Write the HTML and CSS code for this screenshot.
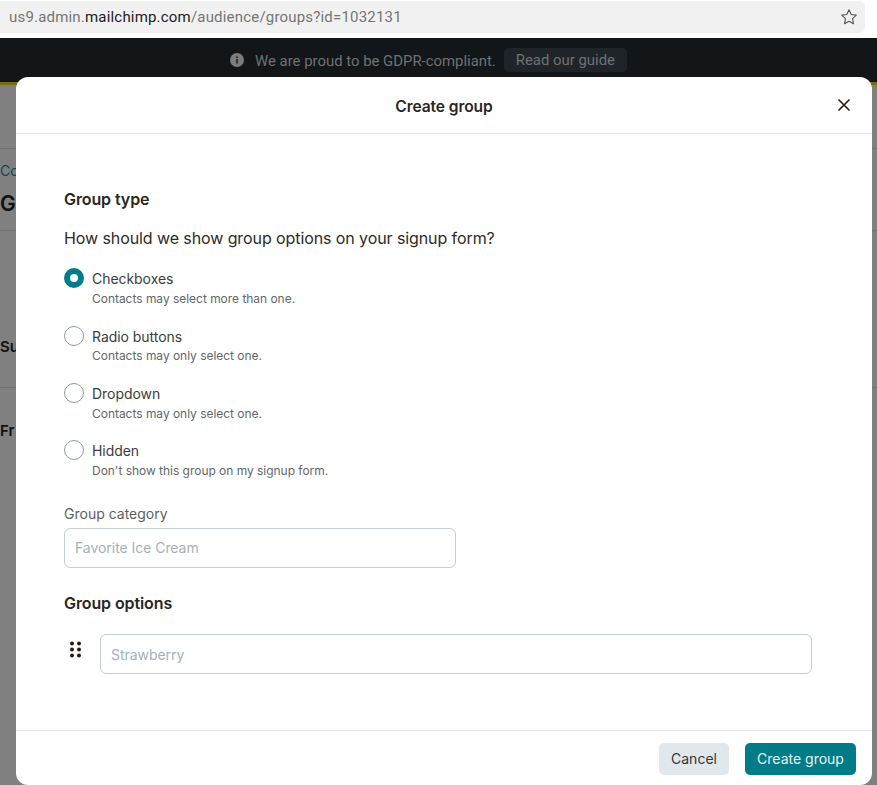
FILE: index.html
```html
<!DOCTYPE html>
<html lang="en">
<head>
<meta charset="utf-8">
<title>Create group</title>
<link rel="stylesheet" href="styles.css">
</head>
<body>
<div class="browser">
  <div class="url">
    <span class="url-text">us9.admin.<b>mailchimp.com</b>/audience/groups?id=1032131</span>
    <svg class="star" width="18" height="18" viewBox="0 0 18 18"><path d="M9 1.8l2.2 4.7 5.1.6-3.8 3.5 1 5.1L9 13.2l-4.5 2.5 1-5.1-3.8-3.5 5.1-.6z" fill="none" stroke="#555" stroke-width="1.1" stroke-linejoin="round"/></svg>
  </div>
</div>
<div class="banner">
  <svg class="info" width="14" height="14" viewBox="0 0 14 14"><circle cx="7" cy="7" r="7" fill="#7c7c7c"/><rect x="6.2" y="6" width="1.6" height="4.6" fill="#222"/><rect x="6.2" y="3.4" width="1.6" height="1.6" fill="#222"/></svg>
  <span class="banner-text">We are proud to be GDPR-compliant.</span>
  <span class="banner-btn">Read our guide</span>
</div>
<div class="page">
  <div class="rule r1"></div>
  <div class="crumb">Co</div>
  <div class="title">G</div>
  <div class="rule r2"></div>
  <div class="sub s1">Su</div>
  <div class="rule r3"></div>
  <div class="sub s2">Fr</div>
</div>
<div class="modal">
  <header class="m-head">
    <h1>Create group</h1>
    <svg class="close" width="14" height="14" viewBox="0 0 14 14"><path d="M1.5 1.5l11 11M12.5 1.5l-11 11" stroke="#241c15" stroke-width="1.6" fill="none"/></svg>
  </header>
  <div class="m-body">
    <h2>Group type</h2>
    <p class="question">How should we show group options on your signup form?</p>
    <div class="options">
      <div class="opt"><span class="radio on"></span><div><div class="o-label">Checkboxes</div><div class="o-desc">Contacts may select more than one.</div></div></div>
      <div class="opt"><span class="radio"></span><div><div class="o-label">Radio buttons</div><div class="o-desc">Contacts may only select one.</div></div></div>
      <div class="opt"><span class="radio"></span><div><div class="o-label">Dropdown</div><div class="o-desc">Contacts may only select one.</div></div></div>
      <div class="opt"><span class="radio"></span><div><div class="o-label">Hidden</div><div class="o-desc">Don't show this group on my signup form.</div></div></div>
    </div>
    <label class="f-label" for="cat">Group category</label>
    <input id="cat" class="field cat" placeholder="Favorite Ice Cream">
    <h2 class="h-opts">Group options</h2>
    <div class="opt-row">
      <svg class="drag" width="11" height="17" viewBox="0 0 11 17"><g fill="#241c15"><circle cx="2" cy="2.5" r="2"/><circle cx="9" cy="2.5" r="2"/><circle cx="2" cy="8.5" r="2"/><circle cx="9" cy="8.5" r="2"/><circle cx="2" cy="14.5" r="2"/><circle cx="9" cy="14.5" r="2"/></g></svg>
      <input class="field grow" placeholder="Strawberry">
    </div>
  </div>
  <footer class="m-foot">
    <button class="btn cancel">Cancel</button>
    <button class="btn primary">Create group</button>
  </footer>
</div>
</body>
</html>
```
FILE: styles.css
```css
html, body { margin: 0; padding: 0; height: 785px; overflow: hidden; }
body { background: #808080; font-family: Inter, "Liberation Sans", sans-serif; color: #241c15; position: relative; }
.browser { height: 38px; background: #fff; box-sizing: border-box; padding-top: 1px; }
.url { width: 865px; height: 32px; background: #f1f1f1; border-radius: 0 6px 6px 0; display: flex; align-items: center; justify-content: space-between; padding: 0 7px 0 9px; box-sizing: border-box; }
.url-text { font-family: "Roboto", sans-serif; font-size: 15px; color: #757575; letter-spacing: 0.19px; }
.url-text b { font-weight: 400; color: #1c1c1c; }
.star { display: block; }
.banner { height: 44px; background: #121619; display: flex; align-items: center; justify-content: center; border-bottom: 3px solid #7a6c10; color: #6f7173; font-family: Roboto, sans-serif; padding: 0 20px 0 0; box-sizing: content-box; }
.info { margin-right: 11px; }
.banner-text { font-size: 14.9px; padding-top: 1px; }
.banner-btn { margin-left: 8px; background: #1f2428; border-radius: 5px; padding: 0 12px; height: 24px; line-height: 25px; font-size: 14.9px; }
.page { color: #111; }
.rule { height: 1px; background: #6f6f6f; }
.r1 { margin-top: 63px; }
.crumb { color: #0b4a50; font-size: 14px; margin-top: 13px; line-height: 17px; }
.title { font-size: 21px; font-weight: 600; margin-top: 11px; line-height: 28px; }
.r2 { margin-top: 12px; }
.sub { font-size: 15px; font-weight: 600; line-height: 18px; }
.s1 { margin-top: 107px; }
.r3 { margin-top: 31px; }
.s2 { margin-top: 34px; }
.modal { position: absolute; left: 16px; top: 77px; width: 856px; height: 708px; background: #fff; border-radius: 12px; display: flex; flex-direction: column; }
.m-head { height: 56px; flex: none; border-bottom: 1px solid #e0e6ea; display: flex; align-items: center; justify-content: center; position: relative; box-sizing: content-box; }
.m-head h1 { margin: 0; font-size: 15.6px; font-weight: 600; letter-spacing: -0.1px; padding-top: 2px; color: #2a2622; }
.close { position: absolute; right: 21px; top: 21px; }
.m-body { padding: 55px 60px 0 48px; flex: none; height: 596px; box-sizing: border-box; }
h2 { margin: 0; font-size: 16px; font-weight: 600; line-height: 20px; letter-spacing: -0.1px; color: #2a2622; }
.question { margin: 19px 0 0; font-size: 16px; line-height: 20px; color: #2e2a27; letter-spacing: -0.09px; }
.options { margin-top: 20.4px; display: flex; flex-direction: column; gap: 17.3px; }
.opt { display: flex; gap: 8px; height: 40px; }
.radio { width: 20px; height: 20px; flex: none; border: 1px solid #8f9ba3; border-radius: 50%; box-sizing: border-box; background: #fff; }
.radio.on { border: 6px solid #007c89; }
.o-label { font-size: 14px; line-height: 20px; color: #3a3d40; padding-top: 1px; letter-spacing: -0.05px; }
.o-desc { font-size: 12px; line-height: 18px; margin-top: 0.6px; color: #62676b; letter-spacing: -0.03px; }
.f-label { display: block; margin-top: 23.7px; font-size: 14px; line-height: 20px; color: #5b5f63; }
.field { display: block; box-sizing: border-box; height: 40px; border: 1px solid #c3ced6; border-radius: 6px; padding: 0 10px; font: 14px Inter, sans-serif; letter-spacing: -0.05px; background: #fff; outline: none; }
.field::placeholder { color: #a4b1bc; opacity: 1; }
.cat { width: 392px; margin-top: 4px; }
.h-opts { margin-top: 25px; }
.opt-row { display: flex; align-items: flex-start; margin-top: 21px; padding-left: 6px; }
.drag { margin-top: 7px; margin-right: 19px; flex: none; }
.grow { flex: 1; padding-top: 2px; }
.m-foot { flex: none; border-top: 1px solid #e0e6ea; display: flex; justify-content: flex-end; gap: 16px; padding: 12px 16px 0 0; }
.btn { height: 32px; border: 0; border-radius: 5px; font: 14px Inter, sans-serif; padding: 0 12px 2px; }
.cancel { background: #e1e8ec; color: #32373a; width: 70px; }
.primary { background: #007c89; color: #eaf4f5; width: 111px; }
```
